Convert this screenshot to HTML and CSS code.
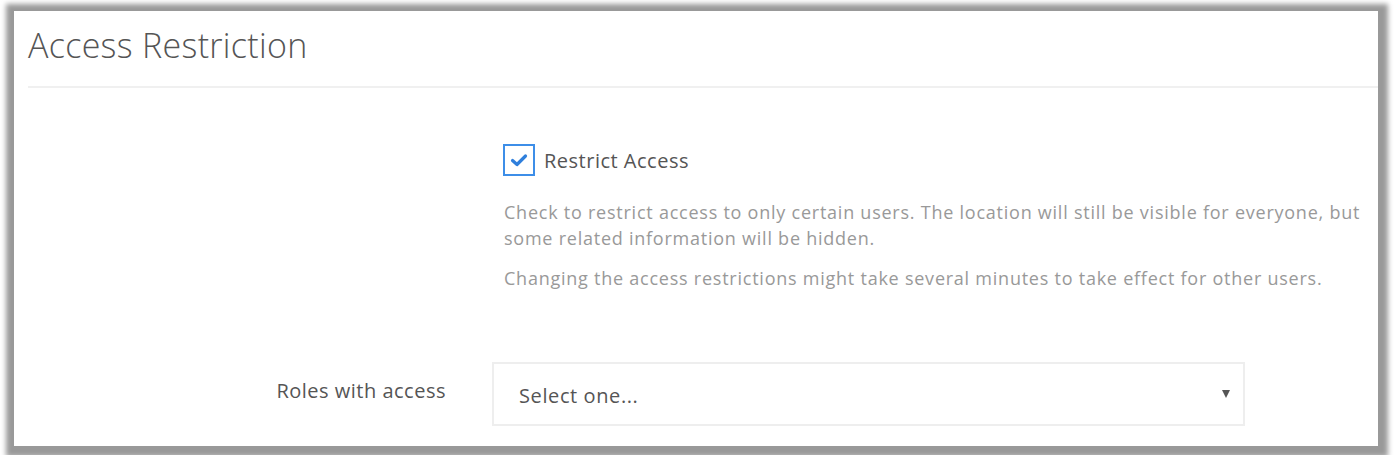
FILE: index.html
```html
<!DOCTYPE html>
<html>
<head>
<meta charset="utf-8">
<link rel="stylesheet" href="styles.css">
</head>
<body>
<div class="frame">
  <div class="panel">
    <div class="header">
      <h1 class="title">Access Restriction</h1>
    </div>
    <div class="form">
      <div class="row">
        <div class="label"></div>
        <div class="control">
          <label class="check">
            <span class="box">
              <svg width="18" height="14" viewBox="0 0 18 14"><path d="M2.5 7.5 L7 11.5 L15.5 3" fill="none" stroke="#2f7fdc" stroke-width="3.2" stroke-linecap="round" stroke-linejoin="round"/></svg>
            </span>
            <span class="check-text">Restrict Access</span>
          </label>
          <p class="help">Check to restrict access to only certain users. The location will still be visible for everyone, but some related information will be hidden.</p>
          <p class="help">Changing the access restrictions might take several minutes to take effect for other users.</p>
        </div>
      </div>
      <div class="row roles">
        <div class="label">Roles with access</div>
        <div class="control">
          <div class="select">
            <span class="placeholder">Select one...</span>
            <span class="arrow"></span>
          </div>
        </div>
      </div>
    </div>
  </div>
</div>
</body>
</html>
```

FILE: styles.css
```css
html, body {
  margin: 0;
  padding: 0;
  background: #ffffff;
  font-family: "Open Sans", "Liberation Sans", sans-serif;
}
.frame {
  padding: 11px 22px 0 14px;
  height: 455px;
  box-sizing: border-box;
  overflow: hidden;
}
.panel {
  background: #ffffff;
  height: 435px;
  overflow: hidden;
  box-shadow: 1px 2px 5px 9px rgba(0, 0, 0, 0.4);
}
.header {
  margin-left: 14px;
  border-bottom: 2px solid #f0f0f0;
  height: 77px;
  box-sizing: border-box;
}
.title {
  margin: 0;
  padding-top: 12px;
  font-weight: 300;
  font-size: 34px;
  letter-spacing: 0.3px;
  line-height: 44px;
  color: #555555;
}
.form {
  padding-top: 56px;
}
.row {
  display: grid;
  grid-template-columns: 432px 1fr;
  column-gap: 46px;
}
.label {
  text-align: right;
  font-size: 20px;
  letter-spacing: 0.5px;
  color: #555555;
}
.control {
  padding-right: 8px;
}
.check {
  display: flex;
  align-items: center;
  margin-left: 11px;
}
.box {
  width: 32px;
  height: 32px;
  box-sizing: border-box;
  border: 2px solid #3d8ee8;
  display: flex;
  align-items: center;
  justify-content: center;
}
.check-text {
  margin-left: 9px;
  font-size: 20px;
  letter-spacing: 0.5px;
  color: #555555;
}
.help {
  margin: 23px 0 0 12px;
  font-size: 18px;
  letter-spacing: 0.76px;
  line-height: 26px;
  color: #999999;
}
.help + .help {
  margin-top: 14px;
}
.roles {
  margin-top: 71px;
  align-items: start;
}
.roles .label {
  padding-top: 15px;
}
.select {
  width: 753px;
  height: 64px;
  box-sizing: border-box;
  border: 2px solid #eeeeee;
  display: flex;
  align-items: center;
  justify-content: space-between;
  padding: 3px 13px 0 25px;
}
.placeholder {
  font-size: 20px;
  letter-spacing: 0.6px;
  color: #555555;
}
.arrow {
  width: 0;
  height: 0;
  border-left: 4px solid transparent;
  border-right: 4px solid transparent;
  border-top: 8px solid #555555;
  margin-bottom: 4px;
}
```
